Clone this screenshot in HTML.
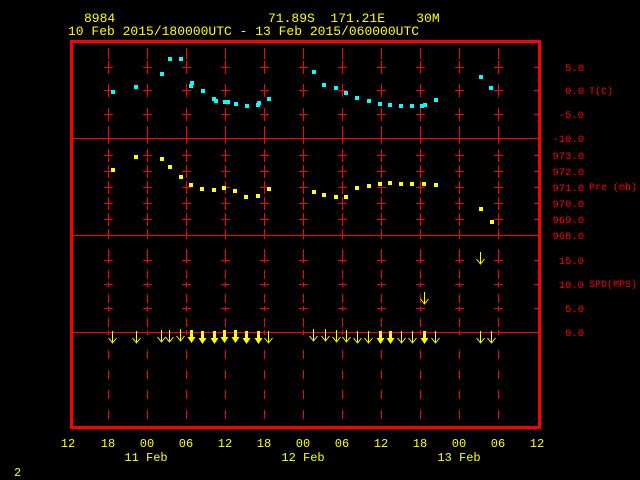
<!DOCTYPE html>
<html><head><style>
html,body{margin:0;padding:0;background:#000;width:640px;height:480px;overflow:hidden}
svg{display:block}
text{font-family:"Liberation Mono",monospace;white-space:pre}
</style></head><body>
<svg width="640" height="480" xmlns="http://www.w3.org/2000/svg" shape-rendering="crispEdges">
<defs>
<g id="a"><path d="M0.5 -3 V8 M-3.5 4 L0.5 9 L4.5 4" stroke="#ff0" stroke-width="1" fill="none" shape-rendering="auto"/></g>
<g id="b"><rect x="-1" y="-3" width="3" height="10" fill="#ff0"/><path d="M-3.5 4 L0.5 10 L4.5 4Z" fill="#ff0" shape-rendering="auto"/></g>
<g id="col" fill="#f00">
<rect x="0" y="48" width="1" height="11"/>
<rect x="0" y="61" width="1" height="13"/><rect x="-4" y="67" width="9" height="1"/>
<rect x="0" y="84" width="1" height="13"/><rect x="-4" y="90" width="9" height="1"/>
<rect x="0" y="108" width="1" height="13"/><rect x="-4" y="114" width="9" height="1"/>
<rect x="0" y="126" width="1" height="18"/>
<rect x="0" y="149" width="1" height="13"/><rect x="-4" y="155" width="9" height="1"/>
<rect x="0" y="165" width="1" height="13"/><rect x="-4" y="171" width="9" height="1"/>
<rect x="0" y="181" width="1" height="13"/><rect x="-4" y="187" width="9" height="1"/>
<rect x="0" y="197" width="1" height="13"/><rect x="-4" y="203" width="9" height="1"/>
<rect x="0" y="213" width="1" height="13"/><rect x="-4" y="219" width="9" height="1"/>
<rect x="0" y="229" width="1" height="10"/>
<rect x="0" y="249" width="1" height="14"/><rect x="-4" y="260" width="9" height="1"/>
<rect x="0" y="270" width="1" height="9"/>
<rect x="0" y="282" width="1" height="5"/><rect x="-4" y="284" width="9" height="1"/>
<rect x="0" y="294" width="1" height="9"/>
<rect x="0" y="306" width="1" height="5"/><rect x="-4" y="308" width="9" height="1"/>
<rect x="0" y="318" width="1" height="9"/>
<rect x="0" y="330" width="1" height="5"/>
<rect x="0" y="350" width="1" height="9"/><rect x="0" y="370" width="1" height="9"/><rect x="0" y="390" width="1" height="9"/><rect x="0" y="410" width="1" height="9"/>
</g>
</defs>
<g fill="#ff0" font-size="13">
<text x="84" y="22" xml:space="preserve">8984</text>
<text x="268" y="22" xml:space="preserve">71.89S  171.21E    30M</text>
<text x="68" y="35" xml:space="preserve">10 Feb 2015/180000UTC - 13 Feb 2015/060000UTC</text>
<text x="14" y="476" font-size="12">2</text>
</g>
<use href="#col" x="108"/><use href="#col" x="147"/><use href="#col" x="186"/><use href="#col" x="225"/><use href="#col" x="264"/><use href="#col" x="303"/><use href="#col" x="342"/><use href="#col" x="381"/><use href="#col" x="420"/><use href="#col" x="459"/><use href="#col" x="498"/>
<g fill="#f00">
<rect x="71" y="138" width="469" height="1"/><rect x="71" y="235" width="469" height="1"/><rect x="71" y="332" width="469" height="1"/>
<rect x="534" y="67" width="6" height="1"/><rect x="534" y="90" width="6" height="1"/><rect x="534" y="114" width="6" height="1"/><rect x="534" y="155" width="6" height="1"/><rect x="534" y="171" width="6" height="1"/><rect x="534" y="187" width="6" height="1"/><rect x="534" y="203" width="6" height="1"/><rect x="534" y="219" width="6" height="1"/><rect x="534" y="260" width="6" height="1"/><rect x="534" y="284" width="6" height="1"/><rect x="534" y="308" width="6" height="1"/>
<rect x="70" y="40" width="471" height="3"/><rect x="70" y="426" width="471" height="3"/><rect x="70" y="40" width="3" height="389"/><rect x="538" y="40" width="3" height="389"/>
</g>
<g fill="#f00" font-size="10.5" text-anchor="end">
<text x="584" y="71">5.0</text><text x="584" y="94">0.0</text><text x="584" y="118">-5.0</text><text x="584" y="142">-10.0</text>
<text x="584" y="159">973.0</text><text x="584" y="175">972.0</text><text x="584" y="191">971.0</text><text x="584" y="207">970.0</text><text x="584" y="223">969.0</text><text x="584" y="239">968.0</text>
<text x="584" y="264">15.0</text><text x="584" y="288">10.0</text><text x="584" y="312">5.0</text><text x="584" y="336">0.0</text>
</g>
<g fill="#f00" font-size="10">
<text x="589" y="94">T(C)</text><text x="589" y="190" xml:space="preserve">Pre (mb)</text><text x="589" y="287">SPD(MPS)</text>
</g>
<g fill="#0ff">
<rect x="111" y="90" width="4" height="4"/><rect x="134" y="85" width="4" height="4"/><rect x="160" y="72" width="4" height="4"/><rect x="168" y="57" width="4" height="4"/><rect x="179" y="57" width="4" height="4"/><rect x="190" y="81" width="4" height="4"/><rect x="189" y="84" width="4" height="4"/><rect x="201" y="89" width="4" height="4"/><rect x="212" y="97" width="4" height="4"/><rect x="214" y="99" width="4" height="4"/><rect x="223" y="100" width="4" height="4"/><rect x="226" y="100" width="4" height="4"/><rect x="234" y="102" width="4" height="4"/><rect x="245" y="104" width="4" height="4"/><rect x="257" y="101" width="4" height="4"/><rect x="256" y="103" width="4" height="4"/><rect x="267" y="97" width="4" height="4"/>
<rect x="312" y="70" width="4" height="4"/><rect x="322" y="83" width="4" height="4"/><rect x="334" y="86" width="4" height="4"/><rect x="344" y="91" width="4" height="4"/><rect x="355" y="96" width="4" height="4"/><rect x="367" y="99" width="4" height="4"/><rect x="378" y="102" width="4" height="4"/><rect x="388" y="103" width="4" height="4"/><rect x="399" y="104" width="4" height="4"/><rect x="410" y="104" width="4" height="4"/><rect x="420" y="104" width="4" height="4"/><rect x="423" y="103" width="4" height="4"/><rect x="434" y="98" width="4" height="4"/><rect x="479" y="75" width="4" height="4"/><rect x="489" y="86" width="4" height="4"/>
</g>
<g fill="#ff0">
<rect x="111" y="168" width="4" height="4"/><rect x="134" y="155" width="4" height="4"/><rect x="160" y="157" width="4" height="4"/><rect x="168" y="165" width="4" height="4"/><rect x="179" y="175" width="4" height="4"/><rect x="189" y="183" width="4" height="4"/><rect x="200" y="187" width="4" height="4"/><rect x="212" y="188" width="4" height="4"/><rect x="222" y="186" width="4" height="4"/><rect x="233" y="189" width="4" height="4"/><rect x="244" y="195" width="4" height="4"/><rect x="256" y="194" width="4" height="4"/><rect x="267" y="187" width="4" height="4"/>
<rect x="312" y="190" width="4" height="4"/><rect x="322" y="193" width="4" height="4"/><rect x="334" y="195" width="4" height="4"/><rect x="344" y="195" width="4" height="4"/><rect x="355" y="186" width="4" height="4"/><rect x="367" y="184" width="4" height="4"/><rect x="378" y="182" width="4" height="4"/><rect x="388" y="181" width="4" height="4"/><rect x="399" y="182" width="4" height="4"/><rect x="410" y="182" width="4" height="4"/><rect x="422" y="182" width="4" height="4"/><rect x="434" y="183" width="4" height="4"/><rect x="479" y="207" width="4" height="4"/><rect x="490" y="220" width="4" height="4"/>
</g>
<g>
<use href="#a" x="112" y="334"/><use href="#a" x="136" y="334"/><use href="#a" x="161" y="333"/><use href="#a" x="169" y="333"/><use href="#a" x="180" y="332"/>
<use href="#b" x="191" y="333"/><use href="#b" x="202" y="334"/><use href="#b" x="214" y="334"/><use href="#b" x="224" y="333"/><use href="#b" x="235" y="333"/><use href="#b" x="246" y="334"/><use href="#b" x="258" y="334"/><use href="#a" x="268" y="334"/>
<use href="#a" x="313" y="332"/><use href="#a" x="325" y="332"/><use href="#a" x="336" y="333"/><use href="#a" x="346" y="333"/><use href="#a" x="357" y="334"/><use href="#a" x="368" y="334"/>
<use href="#b" x="380" y="334"/><use href="#b" x="390" y="334"/><use href="#a" x="401" y="334"/><use href="#a" x="412" y="334"/><use href="#b" x="424" y="334"/><use href="#a" x="435" y="334"/>
<use href="#a" x="480" y="334"/><use href="#a" x="491" y="334"/>
<use href="#a" x="480" y="255"/><use href="#a" x="424" y="295"/>
</g>
<g fill="#ff0" font-size="12" text-anchor="middle">
<text x="68" y="447">12</text><text x="108" y="447">18</text><text x="147" y="447">00</text><text x="186" y="447">06</text><text x="225" y="447">12</text><text x="264" y="447">18</text><text x="303" y="447">00</text><text x="342" y="447">06</text><text x="381" y="447">12</text><text x="420" y="447">18</text><text x="459" y="447">00</text><text x="498" y="447">06</text><text x="537" y="447">12</text>
<text x="146" y="461" xml:space="preserve">11 Feb</text><text x="303" y="461" xml:space="preserve">12 Feb</text><text x="459" y="461" xml:space="preserve">13 Feb</text>
</g>
</svg>
</body></html>
